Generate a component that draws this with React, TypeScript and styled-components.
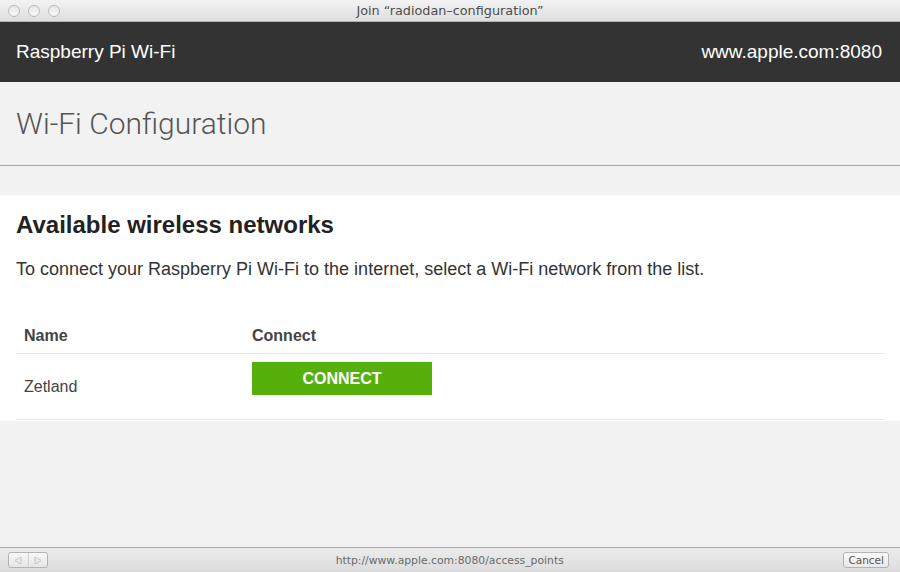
import styled, { createGlobalStyle } from 'styled-components'

const Global = createGlobalStyle`
  html, body {
    margin: 0;
    padding: 0;
    overflow: hidden;
  }
  * { box-sizing: border-box; }
`

//#region window chrome
const Win = styled.div`
  width: 900px;
  height: 572px;
  display: flex;
  flex-direction: column;
  background: #f2f2f2;
  font-family: 'Liberation Sans', Arial, sans-serif;
`
const TitleBar = styled.div`
  height: 22px;
  flex: none;
  display: flex;
  align-items: center;
  padding: 0 8px;
  gap: 8px;
  background: linear-gradient(#f3f3f3, #dedede);
  border-bottom: 1px solid #b5b5b5;
`
const Light = styled.span`
  width: 12px;
  height: 12px;
  border-radius: 50%;
  border: 1px solid #b9b9b9;
  background: linear-gradient(#e9e9e9, #f6f6f6);
`
const WinTitle = styled.div`
  flex: 1;
  text-align: center;
  margin-right: 60px;
  font-family: 'DejaVu Sans', sans-serif;
  font-size: 12.8px;
  color: #4d4d4d;
`
const BottomBar = styled.div`
  height: 25px;
  flex: none;
  display: flex;
  align-items: center;
  justify-content: space-between;
  padding: 0 11px 0 8px;
  background: linear-gradient(#ececec, #dcdcdc);
  border-top: 1px solid #a9a9a9;
  font-family: 'DejaVu Sans', sans-serif;
`
const NavButtons = styled.div`
  width: 40px;
  height: 16px;
  display: flex;
  border: 1px solid #b3b3b3;
  border-radius: 3px;
  background: linear-gradient(#f8f8f8, #e6e6e6);
`
const NavHalf = styled.div<{ $left?: boolean }>`
  flex: 1;
  display: flex;
  align-items: center;
  justify-content: center;
  border-right: ${p => (p.$left ? '1px solid #cfcfcf' : 'none')};
`
const StatusUrl = styled.div`
  font-size: 10.8px;
  color: #6a6a6a;
  margin-left: 8px;
`
const CancelBtn = styled.div`
  height: 16px;
  padding: 0 4px;
  border: 1px solid #b3b3b3;
  border-radius: 3px;
  background: linear-gradient(#fbfbfb, #e8e8e8);
  font-size: 10.5px;
  color: #555;
  display: flex;
  align-items: center;
`
//#endregion

//#region page
const Page = styled.div`
  flex: auto;
  display: flex;
  flex-direction: column;
  background: #f2f2f2;
`
const TopBar = styled.div`
  height: 60px;
  flex: none;
  display: flex;
  align-items: center;
  justify-content: space-between;
  padding: 0 18px 0 16px;
  background: #333333;
  color: #ffffff;
  font-size: 19px;
`
const PageHead = styled.div`
  height: 84px;
  flex: none;
  display: flex;
  align-items: center;
  padding: 0 16px;
  border-bottom: 1px solid #a8a8a8;
`
const PageTitle = styled.h1`
  margin: 0;
  font-family: Roboto, 'Liberation Sans', sans-serif;
  font-weight: 300;
  font-size: 30px;
  color: #555555;
`
const Card = styled.div`
  margin-top: 29px;
  background: #ffffff;
  padding: 16px 16px 1px;
`
const CardTitle = styled.h2`
  margin: 0;
  font-size: 24px;
  line-height: 28px;
  font-weight: bold;
  color: #222;
`
const Lead = styled.p`
  margin: 18px 0 0;
  font-size: 18px;
  line-height: 24px;
  color: #333;
`
const Table = styled.div`
  margin-top: 37px;
`
const Row = styled.div<{ $head?: boolean }>`
  display: grid;
  grid-template-columns: 228px 1fr;
  min-height: ${p => (p.$head ? '36px' : '65px')};
  align-items: ${p => (p.$head ? 'center' : 'start')};
  border-bottom: 1px solid #e6e6e6;
  font-size: 16px;
  font-weight: ${p => (p.$head ? 'bold' : 'normal')};
  color: #444;
`
const Cell = styled.div<{ $mid?: boolean }>`
  padding: 0 8px;
  align-self: ${p => (p.$mid ? 'center' : 'auto')};
`
const BtnCell = styled.div`
  padding: 8px 8px 24px;
`
const ConnectBtn = styled.button`
  width: 180px;
  height: 33px;
  border: none;
  background: #56b00b;
  color: #fff;
  font-family: 'Liberation Sans', Arial, sans-serif;
  font-weight: bold;
  font-size: 16px;
  cursor: pointer;
`
//#endregion

const networks = ['Zetland']

export default function App() {
  return (
    <Win>
      <Global />
      <TitleBar>
        <Light />
        <Light />
        <Light />
        <WinTitle>Join “radiodan–configuration”</WinTitle>
      </TitleBar>
      <Page>
        <TopBar>
          <span>Raspberry Pi Wi-Fi</span>
          <span>www.apple.com:8080</span>
        </TopBar>
        <PageHead>
          <PageTitle>Wi-Fi Configuration</PageTitle>
        </PageHead>
        <Card>
          <CardTitle>Available wireless networks</CardTitle>
          <Lead>To connect your Raspberry Pi Wi-Fi to the internet, select a Wi-Fi network from the list.</Lead>
          <Table>
            <Row $head>
              <Cell>Name</Cell>
              <Cell>Connect</Cell>
            </Row>
            {networks.map(n => (
              <Row key={n}>
                <Cell $mid>{n}</Cell>
                <BtnCell>
                  <ConnectBtn>CONNECT</ConnectBtn>
                </BtnCell>
              </Row>
            ))}
          </Table>
        </Card>
      </Page>
      <BottomBar>
        <NavButtons>
          <NavHalf $left>
            <svg width="8" height="9" viewBox="0 0 8 9"><path d="M7 1 L1 4.5 L7 8 Z" fill="none" stroke="#c4c4c4" /></svg>
          </NavHalf>
          <NavHalf>
            <svg width="8" height="9" viewBox="0 0 8 9"><path d="M1 1 L7 4.5 L1 8 Z" fill="none" stroke="#c4c4c4" /></svg>
          </NavHalf>
        </NavButtons>
        <StatusUrl>http://www.apple.com:8080/access_points</StatusUrl>
        <CancelBtn>Cancel</CancelBtn>
      </BottomBar>
    </Win>
  )
}
